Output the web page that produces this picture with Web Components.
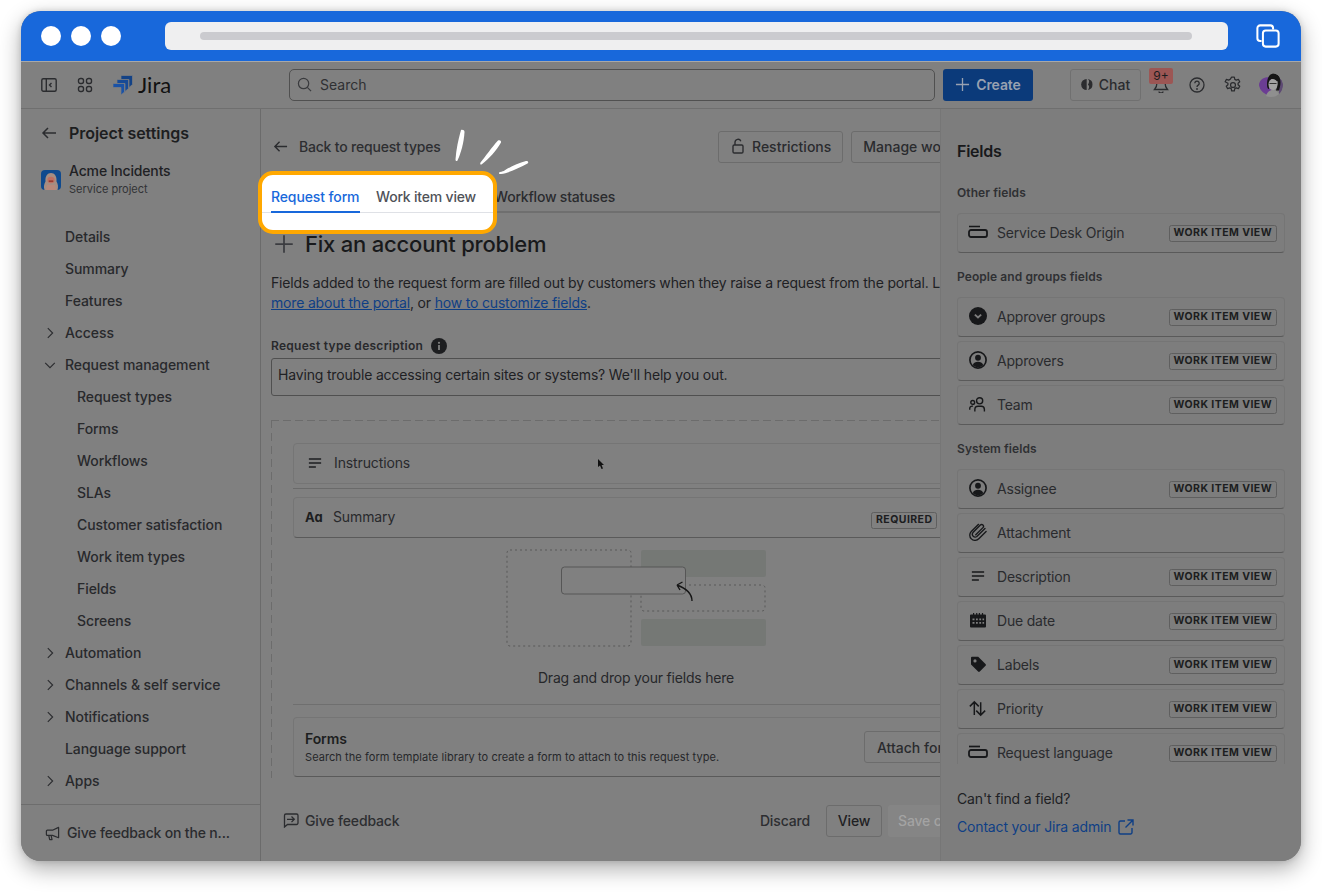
<!DOCTYPE html>
<html lang="en"><head><meta charset="utf-8"><title>Jira</title>
<style>
html,body{margin:0;background:#fff;height:100%;overflow:hidden}
body{padding:11px 21px;box-sizing:border-box;font-family:Inter,"Liberation Sans",sans-serif;font-size:14px;color:#1f2023}
</style></head><body>
<app-window></app-window>
<script>
const I={
back:'<path d="M15 8H2M7 3 2 8l5 5" fill="none" stroke="C" stroke-width="1.5"/>',
side:'<rect x=".8" y="1.8" width="14.4" height="12.4" rx="1.5" fill="none" stroke="C" stroke-width="1.4"/><path d="M5.3 2v12M10.5 6 8.5 8l2 2" fill="none" stroke="C" stroke-width="1.4"/>',
apps:'<g fill="none" stroke="C" stroke-width="1.4"><rect x="1.5" y="1.5" width="5" height="5" rx="2"/><rect x="9.5" y="1.5" width="5" height="5" rx="2"/><rect x="1.5" y="9.5" width="5" height="5" rx="2"/><rect x="9.5" y="9.5" width="5" height="5" rx="2"/></g>',
search:'<circle cx="7" cy="7" r="5.5" fill="none" stroke="C" stroke-width="1.3"/><path d="m11 11 4 4" stroke="C" stroke-width="1.3"/>',
plus:'<path d="M8 1v14M1 8h14" stroke="C" stroke-width="1.4"/>',
bell:'<path d="M8 1.5a4 4 0 0 0-4 4c0 4-1.2 5.5-2.5 7h13C13.200 11 12 9.500 12 5.500a4 4 0 0 0-4-4zM6 14.500a2 1.500 0 0 0 4 0" fill="none" stroke="C" stroke-width="1.3"/>',
help:'<circle cx="8" cy="8" r="7" fill="none" stroke="C" stroke-width="1.3"/><path d="M5.800 6.200a2.200 2.200 0 1 1 3.400 1.900c-.8.5-1.200 1-1.200 1.900" fill="none" stroke="C" stroke-width="1.3"/><circle cx="8" cy="12" r=".9" fill="C"/>',
gear:'<path d="M6.800 1h2.400l.4 2 1.300.7 1.900-.7 1.200 2.100-1.500 1.300v1.400l1.500 1.300-1.200 2.100-1.900-.7-1.300.7-.4 2H6.800l-.4-2-1.300-.7-1.900.7-1.200-2.100 1.500-1.300V6.400L1 5.100l1.200-2.100 1.900.7 1.300-.7z" fill="none" stroke="C" stroke-width="1.100" stroke-linejoin="round"/><circle cx="8" cy="8" r="2.200" fill="none" stroke="C" stroke-width="1.100"/>',
chat:'<path d="M7 1.200A6.800 6.800 0 1 0 7 14.800z" fill="C"/><path d="M8.500 1.300a6.800 6.800 0 0 1 0 13.400C11 12 10 9 8.500 8 10 6 11 3.500 8.500 1.300z" fill="C"/>',
right:'<path d="m5.500 2.500 5.500 5.500-5.500 5.500" fill="none" stroke="C" stroke-width="1.300"/>',
down:'<path d="m2.500 5.500 5.500 5.500 5.500-5.500" fill="none" stroke="C" stroke-width="1.300"/>',
mega:'<path d="M14.500 1.500v11L8 10H2.500a1 1 0 0 1-1-1V5.500a1 1 0 0 1 1-1H8zM4 10l1 4.500h2.500L6.500 10" fill="none" stroke="C" stroke-width="1.300" stroke-linejoin="round"/>',
lock:'<rect x="3" y="7" width="10" height="8" rx="1.300" fill="none" stroke="C" stroke-width="1.400"/><path d="M5 7V4.200a3 3 0 0 1 5.800-1" fill="none" stroke="C" stroke-width="1.400"/>',
info:'<circle cx="8" cy="8" r="8" fill="C"/><rect x="7.100" y="7" width="1.800" height="5" fill="#808080"/><circle cx="8" cy="4.800" r="1.100" fill="#808080"/>',
lines:'<path d="M1 3.500h14M1 8h14M1 12.500h8" stroke="C" stroke-width="1.700"/>',
feedback:'<path d="M1.500 15V3.500A1.500 1.500 0 0 1 3 2h10.500A1.500 1.500 0 0 1 15 3.500V11a1.500 1.500 0 0 1-1.500 1.500H4.500z" fill="none" stroke="C" stroke-width="1.300"/><path d="M4 7.300h7M8.500 4.500l2.800 2.800-2.800 2.800" fill="none" stroke="C" stroke-width="1.300"/>',
ext:'<path d="M7 2H2.500A1.500 1.500 0 0 0 1 3.500v10A1.500 1.500 0 0 0 2.500 15h10a1.500 1.500 0 0 0 1.500-1.500V9M9.500 1H15v5.500M15 1 7.500 8.500" fill="none" stroke="C" stroke-width="1.400"/>',
dropdown:'<path d="M1 2.500h11" stroke="C" stroke-width="1.700"/><rect x="1" y="6" width="18" height="7" rx="2" fill="none" stroke="C" stroke-width="1.800"/>',
groupd:'<circle cx="8" cy="8" r="8" fill="C"/><path d="m5.200 6.800 2.800 2.500 2.800-2.500" fill="none" stroke="#7d7d7d" stroke-width="1.700"/>',
person:'<circle cx="8" cy="8" r="7.200" fill="none" stroke="C" stroke-width="1.500"/><circle cx="8" cy="6" r="2.600" fill="C"/><path d="M3.300 12.600C4 10.200 6 9.600 8 9.600s4 .6 4.700 3a7 7 0 0 1-9.400 0z" fill="C"/>',
team:'<g fill="none" stroke="C" stroke-width="1.300"><circle cx="10" cy="4.500" r="2.900"/><path d="M5.500 14.500v-1.800a3 3 0 0 1 3-3h3a3 3 0 0 1 3 3v1.800"/><circle cx="3.500" cy="6" r="1.800"/><path d="M.7 13v-1.200A2.300 2.300 0 0 1 3 9.500h.8"/></g>',
clip:'<path d="M14.200 4.800 7 12a2.500 2.500 0 0 1-3.500-3.500l6.600-6.700a1.600 1.600 0 0 1 2.300 2.300L6 10.500M15.200 7.500 8.700 14A4.500 4.500 0 0 1 2 7.500l6.500-6.300" fill="none" stroke="C" stroke-width="1.200" stroke-linecap="round"/>',
cal:'<path fill="C" fill-rule="evenodd" d="M1 2.500h2V1h1.200v1.500h1.900V1h1.200v1.500h1.500V1h1.200v1.500h1.900V1h1.200v1.500H15a1 1 0 0 1 1 1V14.500a1 1 0 0 1-1 1H1a1 1 0 0 1-1-1V3.500a1 1 0 0 1 1-1zM2.500 6.500v1.800h2V6.500zm3.500 0v1.800h1.800V6.500zm3.300 0v1.800h1.800V6.500zm3.200 0v1.800h1.600V6.500zM2.500 10v1.800h2V10zM6 10v1.800h1.800V10zm3.300 0v1.800h1.800V10zm3.200 0v1.800h1.600V10z"/>',
tag:'<path fill="C" fill-rule="evenodd" d="M1 1.800A1 1 0 0 1 2 .8h6.200l7.300 7.300a1.200 1.200 0 0 1 0 1.700l-5.700 5.700a1.200 1.200 0 0 1-1.700 0L1 8.500zM5 3.300a1.600 1.600 0 1 0 0 3.200 1.600 1.600 0 0 0 0-3.200z"/>',
prio:'<path d="M5 14V2M.8 6 5 1.800 9.200 6M11 2v12M6.800 10l4.200 4.200 4.200-4.200" fill="none" stroke="C" stroke-width="1.400"/>'
};
customElements.define('x-icon',class extends HTMLElement{
  static get observedAttributes(){return['name','size','w','color'];}
  constructor(){super();this.attachShadow({mode:'open'}).innerHTML='<style>:host{display:inline-flex;flex:none}svg{display:block}</style><svg></svg>';}
  attributeChangedCallback(){this.render();}
  connectedCallback(){this.render();}
  render(){
    const n=this.getAttribute('name');if(!n||!I[n])return;
    const s=+(this.getAttribute('size')||16),w=+(this.getAttribute('w')||s),c=this.getAttribute('color')||'#26272a',svg=this.shadowRoot.querySelector('svg');
    svg.setAttribute('width',w);svg.setAttribute('height',s);
    svg.setAttribute('viewBox',`0 0 ${n==='dropdown'?20:16} 16`);
    svg.innerHTML=I[n].replace(/="C"/g,`="${c}"`);
  }
});
function define(name,html,init){
  const t=document.createElement('template');t.innerHTML=html;
  customElements.define(name,class extends HTMLElement{
    constructor(){super();this.attachShadow({mode:'open'}).appendChild(document.importNode(t.content,true));}
    connectedCallback(){if(init)init.call(this,this.shadowRoot);}
  });
}
define('work-tag',`<style>:host{display:inline-flex;align-items:flex-start;height:15px;padding:0 4px;border:1px solid #5f5f5f;border-radius:2.500px;font:700 10.500px/14px Inter,"Liberation Sans",sans-serif;letter-spacing:.44px;color:#1c1d20;white-space:nowrap;position:relative;top:1px}</style><slot></slot>`);
define('field-card',`<style>
:host{display:flex;align-items:center;height:40px;box-sizing:border-box;margin-bottom:4px;border-radius:4px;background:#7d7d7d;border:1px solid #757575;border-bottom:1px solid #5a5a5a;font-size:14px;letter-spacing:-.2px;color:#2a2b2e;padding:0 7px 2px 0;flex:none}
.i{width:39px;display:flex;justify-content:center}
.t{flex:1;white-space:nowrap}
</style><div class="i"><x-icon></x-icon></div><div class="t"><slot></slot></div><work-tag></work-tag>`,function(r){
  const ic=r.querySelector('x-icon'),n=this.getAttribute('icon');
  ic.setAttribute('color','#17181a');
  ic.setAttribute('size',this.getAttribute('isize')||(n==='dropdown'?16:18));
  if(n==='dropdown')ic.setAttribute('w',20);
  ic.setAttribute('name',n);
  const t=r.querySelector('work-tag');
  if(this.hasAttribute('notag'))t.remove();else t.textContent='WORK ITEM VIEW';
});
define('field-group',`<style>:host{display:block}h4{margin:0;font:600 12px/16px Inter,"Liberation Sans",sans-serif;letter-spacing:.08px;color:#2f3033;height:16px}.l{display:flex;flex-direction:column;margin-top:12px}</style><h4></h4><div class="l"><slot></slot></div>`,function(r){r.querySelector('h4').textContent=this.getAttribute('label');});
define('nav-item',`<style>
:host{display:flex;align-items:center;height:32px;font:500 14px/20px Inter,"Liberation Sans",sans-serif;letter-spacing:-.07px;color:#28292c;white-space:nowrap;padding-left:44px}
:host([sub]){padding-left:56px}
x-icon{margin-left:-22px;margin-right:8px}
</style><x-icon size="14" color="#2b2c2f"></x-icon><slot></slot>`,function(r){
  const ic=r.querySelector('x-icon'),c=this.getAttribute('chev');
  if(c)ic.setAttribute('name',c);else ic.remove();
});
define('top-nav',`<style>
:host{display:flex;align-items:center;height:46px;padding:0 20px;border-top:1px solid #a8a8a8;border-bottom:1px solid #6f6f6f;background:#808080;color:#2b2c2f;flex:none}
.j{display:flex;align-items:center;margin-left:20px;gap:5px;font:400 22px/28px Lato,Inter,sans-serif;color:#111;width:58px;flex:none}
.search{width:646px;height:32px;box-sizing:border-box;margin-left:118px;border:1px solid #505050;border-radius:5px;display:flex;align-items:center;gap:8px;padding:0 0 2px 7px;color:#2f3033;font-size:14px;flex:none}
.create{margin-left:8px;width:90px;height:32px;box-sizing:border-box;padding-bottom:2px;background:#0b3a7a;border-radius:3px;display:flex;align-items:center;justify-content:center;gap:6px;font-weight:600;letter-spacing:-.1px;color:#98a1b1;font-size:14px;flex:none}
.chat{margin-left:37px;width:71px;height:32px;box-sizing:border-box;padding-bottom:2px;border:1px solid #707070;border-radius:3px;display:flex;align-items:center;justify-content:center;gap:5px;font-weight:500;color:#2a2b2e;flex:none}
.bell{margin-left:12px;position:relative;width:16px;height:16px;margin-right:20px;flex:none}
.badge{position:absolute;left:-4px;top:-9px;width:24px;height:16px;background:#9c5654;border-radius:2px;color:#1b1c1e;font-size:12px;line-height:16px;text-align:center}
.av{width:24px;height:24px;border-radius:50%;overflow:hidden;margin-left:18px;flex:none}
</style>
<x-icon name="side" color="#2b2c2f"></x-icon>
<x-icon name="apps" color="#2b2c2f" style="margin-left:20px"></x-icon>
<div class="j"><svg width="20" height="20" viewBox="0 0 20 20" style="flex:none"><g stroke="#808080" stroke-width=".7" stroke-linejoin="round"><path fill="#134286" d="M8 .5h11.500v9l-3.500 3V4.500H8z"/><path fill="#174a96" d="M4 4.500h11.500v9L12 16.500V8.500H4z"/><path fill="#1a52a6" d="M0 8.500h11.500v8.500L8 20V12.500H0z"/></g></svg><span>Jira</span></div>
<div class="search"><x-icon name="search" color="#3a3b3e" size="15"></x-icon>Search</div>
<div class="create"><x-icon name="plus" color="#98a1b1" size="15"></x-icon>Create</div>
<div class="chat"><x-icon name="chat" color="#2b2c2f" size="13"></x-icon>Chat</div>
<div class="bell"><x-icon name="bell" color="#2b2c2f"></x-icon><div class="badge">9+</div></div>
<x-icon name="help" color="#2b2c2f"></x-icon>
<x-icon name="gear" color="#2b2c2f" size="18" style="margin:0 -1px 0 19px"></x-icon>
<div class="av"><svg width="24" height="24" viewBox="0 0 24 24" style="display:block"><rect width="24" height="24" fill="#808080"/><path d="M12 4.500C8 3.500 1 5 0 11c-.5 5 4 9 9 11.500l3-1z" fill="#6b3d93"/><path d="M24 11c-.5-3-2-5-4-6v17c2.500-2 4.500-6 4-11z" fill="#5d4a73"/><path d="M7 24c.5-5 4-7 7-7s6 2 6.500 7z" fill="#8f8f8f"/><path d="M8 12C8 4 11 .5 15 .5s6.500 3.500 6.500 9c0 3-1 6-1.500 8h-3l2-9-7-2.500-2 4v6H9.500C8.500 15.500 8 14 8 12z" fill="#151515"/><ellipse cx="14" cy="11.500" rx="4.500" ry="5.500" fill="#a3a3a3"/><path d="M10.500 10.500h7" stroke="#333" stroke-width="1"/></svg></div>
`);
define('side-nav',`<style>
:host{display:flex;flex-direction:column;width:239px;border-right:1px solid #6b6b6b;flex:none;background:#808080}
.head{display:flex;align-items:center;height:24px;margin-top:12px;padding-left:20px;gap:12px;font:600 16px/24px Inter,"Liberation Sans",sans-serif;letter-spacing:-.04px;color:#1d1e20}
.proj{display:flex;align-items:center;margin:17px 0 0 20px;gap:8px;height:36px}
.proj b{display:block;font:500 14px/18px Inter,"Liberation Sans",sans-serif;letter-spacing:-.15px;color:#202124}
.proj i{display:block;font:400 11px/18px Inter,"Liberation Sans",sans-serif;color:#323336}
.list{flex:1;margin-top:23px;display:flex;flex-direction:column}
.foot{height:57px;border-top:1px solid #6d6d6d;display:flex;align-items:center;padding-left:24px;gap:7px;font:500 14px/20px Inter,"Liberation Sans",sans-serif;letter-spacing:-.17px;color:#2a2b2e;box-sizing:border-box;white-space:nowrap;flex:none}
</style>
<div class="head"><x-icon name="back" color="#2b2c2f"></x-icon>Project settings</div>
<div class="proj"><svg width="20" height="20" viewBox="0 0 20 20" style="flex:none"><rect width="20" height="20" rx="4" fill="#0f4a8e"/><path d="M3.500 20c-1-3-.5-6 1-8.500C4 6 6.500 3 10 3s6 3 5.500 8.500c1.500 2.500 2 5.500 1 8.500z" fill="#a58d82"/><ellipse cx="10" cy="10" rx="3.600" ry="3.200" fill="#bd6f61"/><rect x="7.800" y="10.500" width="4.400" height="1.300" fill="#8e2f25"/><path d="M6 15h8l1 5H5z" fill="#b7897b"/></svg><div><b>Acme Incidents</b><i>Service project</i></div></div>
<div class="list">
<nav-item>Details</nav-item><nav-item>Summary</nav-item><nav-item>Features</nav-item>
<nav-item chev="right">Access</nav-item><nav-item chev="down">Request management</nav-item>
<nav-item sub>Request types</nav-item><nav-item sub>Forms</nav-item><nav-item sub>Workflows</nav-item><nav-item sub>SLAs</nav-item><nav-item sub>Customer satisfaction</nav-item><nav-item sub>Work item types</nav-item><nav-item sub>Fields</nav-item><nav-item sub>Screens</nav-item>
<nav-item chev="right">Automation</nav-item><nav-item chev="right">Channels &amp; self service</nav-item><nav-item chev="right">Notifications</nav-item><nav-item>Language support</nav-item><nav-item chev="right">Apps</nav-item>
</div>
<div class="foot"><x-icon name="mega" color="#2b2c2f" size="15"></x-icon>Give feedback on the n...</div>
`);
define('drag-art',`<style>:host{display:block;height:98px;margin-top:11px}svg{display:block;margin:0 auto}</style>
<svg width="260" height="98" viewBox="0 0 260 98" fill="none">
<rect x="1" y="1" width="124" height="96" rx="3" stroke="#585858" stroke-dasharray="2 3"/>
<rect x="135" y="1" width="125" height="27" rx="2" fill="#757875"/>
<rect x="135" y="36" width="124" height="26" rx="3" stroke="#585858" stroke-dasharray="2 3"/>
<rect x="135" y="70" width="125" height="27" rx="2" fill="#757875"/>
<rect x="55.500" y="18" width="124" height="27" rx="3" fill="#808080" stroke="#565656"/>
<path d="M186 52c0-7-4-12-15-16M171 36l5.500-3M171 36l3 5" stroke="#151515" stroke-width="1.400"/>
</svg>`);
define('request-main',`<style>
:host{display:block;width:679px;overflow:hidden;flex:none;background:#808080;position:relative}
.in{width:730px;margin-left:10px;height:100%;position:relative;box-sizing:border-box}
.top{display:flex;align-items:center;height:32px;margin-top:22px}
.backl{display:flex;align-items:center;gap:11px;color:#2d2e31;font-weight:500;font-size:14px;letter-spacing:-.2px;margin-left:2px;width:445px;flex:none;position:relative;top:-1px}
.btn{height:32px;box-sizing:border-box;border:1px solid #6c6c6c;border-radius:3px;display:flex;align-items:center;padding:0 11px 2px;gap:6px;font-weight:500;color:#2a2b2e;font-size:14px;white-space:nowrap;flex:none}
.tabs{display:flex;height:32px;margin-top:18px;border-bottom:2px solid #6f6f6f;box-sizing:border-box;padding-left:223px;align-items:center;font-weight:500;letter-spacing:-.2px;color:#2a2b2e;width:680px}
h1{margin:15px 0 0;height:32px;display:flex;align-items:center;gap:11px;font:500 22px/32px Inter,"Liberation Sans",sans-serif;letter-spacing:-.2px;color:#18191b;margin-left:3px}
p{margin:13px 0 0;font-size:14px;line-height:20px;white-space:nowrap;color:#202124;letter-spacing:-.18px}
a{color:#0f3f85;text-decoration:underline}
.lab{margin-top:25px;height:16px;display:flex;align-items:center;gap:8px;font:600 12px/16px Inter,"Liberation Sans",sans-serif;letter-spacing:.28px;color:#28292c}
.inp{margin-top:4px;height:38px;box-sizing:border-box;border:1px solid #505050;border-radius:3px;padding:0 6px 6px;display:flex;align-items:center;color:#202124;white-space:nowrap;letter-spacing:-.17px}
.drop{margin-top:24px;padding:23px 22px 0;height:358px;box-sizing:border-box;background:linear-gradient(to right,#6c6c6c 8px,transparent 8px) 0 0/12px 1px repeat-x,linear-gradient(to bottom,#6c6c6c 8px,transparent 8px) 0 0/1px 13px repeat-y}
.card{display:flex;align-items:center;height:41px;box-sizing:border-box;border:1px solid #757575;border-radius:4px;padding:0 0 2px 14px;gap:12px;color:#28292c;position:relative;letter-spacing:-.12px}
.sep{height:1px;background:#6a6a6a;margin:4px 0 8px}
.sum{border-bottom-color:#5a5a5a;padding-left:11px;gap:10px}
.tagw{position:absolute;left:577px;top:10px}
.drag{text-align:center;margin-top:21px;line-height:20px;color:#26272a;letter-spacing:-.2px}
.hr{height:1px;background:#6f6f6f;margin-top:16px}
.forms{margin-top:12px;height:60px;border:1px solid #757575;border-bottom-color:#5a5a5a;border-radius:4px;box-sizing:border-box;padding:0 0 0 11px;display:flex;align-items:center;justify-content:space-between}
.ft{padding-top:2px}
.forms b{display:block;font:600 14px/16px Inter,"Liberation Sans",sans-serif;color:#1d1e20;margin-bottom:2px;letter-spacing:-.1px}
.forms i{display:block;font:400 11px/16px Inter,"Liberation Sans",sans-serif;color:#26272a;letter-spacing:.07px;white-space:nowrap}
.attach{margin-right:14px;height:32px;width:100px;box-sizing:border-box;border:1px solid #6c6c6c;border-radius:3px;font-weight:500;display:flex;align-items:center;padding:0 0 0 12px;color:#2a2b2e;white-space:nowrap;overflow:hidden;flex:none}
.foot{display:flex;align-items:center;height:32px;margin-top:27px;width:707px;font-weight:500;letter-spacing:-.15px;color:#2d2e31;white-space:nowrap}
.fb{display:flex;align-items:center;gap:6px;margin-left:12px;flex:1;position:relative;top:-1px}
.dis{position:relative;top:-1px}
.save{width:90px;height:32px;background:#858585;border-radius:3px;margin-left:6px;color:#a3a3a3;display:flex;align-items:center;padding:0 0 2px 10px;box-sizing:border-box;flex:none}
.view{height:32px;border:1px solid #6c6c6c;border-radius:3px;width:56px;box-sizing:border-box;margin-left:16px;padding-bottom:2px;display:flex;align-items:center;justify-content:center;color:#1f2023;flex:none}
.cur{position:absolute;left:327px;top:328px}
</style>
<div class="in">
<div class="top"><div class="backl"><x-icon name="back" color="#2b2c2f" size="15"></x-icon>Back to request types</div>
<div class="btn"><x-icon name="lock" color="#2b2c2f"></x-icon>Restrictions</div><div class="btn" style="margin-left:8px;">Manage workflow</div></div>
<div class="tabs"><span>Workflow statuses</span></div>
<h1><x-icon name="plus" color="#3b3c40" size="20"></x-icon>Fix an account problem</h1>
<p>Fields added to the request form are filled out by customers when they raise a request from the portal. Learn<br><a>more about the portal</a>, or <a>how to customize fields</a>.</p>
<div class="lab">Request type description<x-icon name="info" color="#1d1e20"></x-icon></div>
<div class="inp">Having trouble accessing certain sites or systems? We'll help you out.</div>
<div class="drop">
<div class="card"><x-icon name="lines" color="#1d1e20" size="14"></x-icon>Instructions</div>
<div class="sep"></div>
<div class="card sum"><span style="font:700 13px/16px Inter,sans-serif;color:#1d1e20;width:18px">Aɑ</span>Summary<span class="tagw"><work-tag>REQUIRED</work-tag></span></div>
<drag-art></drag-art>
<div class="drag">Drag and drop your fields here</div>
<div class="hr"></div>
<div class="forms"><div class="ft"><b>Forms</b><i>Search the form template library to create a form to attach to this request type.</i></div><div class="attach">Attach form</div></div>
</div>
<div class="foot"><div class="fb"><x-icon name="feedback" color="#2b2c2f"></x-icon>Give feedback</div><span class="dis">Discard</span><div class="view">View</div><div class="save">Save changes</div></div>
<svg class="cur" width="7" height="11" viewBox="0 0 7 11"><path d="M0 0v8l2-1.500L3.500 10l1.500-.6L3.600 6H6z" fill="#111"/></svg>
</div>`);
define('fields-panel',`<style>
:host{display:flex;flex-direction:column;flex:1;background:#7d7d7d;border-left:1px solid #767676;padding:0 16px;box-sizing:border-box;min-width:0}
h3{margin:30px 0 0;height:24px;font:600 16px/24px Inter,"Liberation Sans",sans-serif;letter-spacing:-.25px;color:#18191b}
.sc{height:579px;overflow:hidden;width:328px;flex:none;display:flex;flex-direction:column;margin-top:22px}
field-group{margin-bottom:12px;flex:none}
.cant{margin-top:25px;line-height:20px;color:#202124;letter-spacing:-.15px}
.con{margin-top:8px;display:flex;align-items:center;gap:7px;color:#0f3f85;line-height:20px;letter-spacing:-.17px}
</style>
<h3>Fields</h3>
<div class="sc">
<field-group label="Other fields"><field-card icon="dropdown">Service Desk Origin</field-card></field-group>
<field-group label="People and groups fields"><field-card icon="groupd">Approver groups</field-card><field-card icon="person">Approvers</field-card><field-card icon="team" isize="17">Team</field-card></field-group>
<field-group label="System fields"><field-card icon="person">Assignee</field-card><field-card icon="clip" notag>Attachment</field-card><field-card icon="lines" isize="14">Description</field-card><field-card icon="cal" isize="16">Due date</field-card><field-card icon="tag" isize="16">Labels</field-card><field-card icon="prio" isize="17">Priority</field-card><field-card icon="dropdown">Request language</field-card></field-group>
</div>
<div class="cant">Can't find a field?</div>
<div class="con">Contact your Jira admin <x-icon name="ext" color="#0f3f85"></x-icon></div>`);
define('spot-light',`<style>
:host{position:absolute;left:237px;top:160px;width:239px;height:63px;box-sizing:border-box;border:4px solid #ffa800;border-radius:15px;background:#fff;font:500 14px/20px Inter,"Liberation Sans",sans-serif;letter-spacing:-.2px}
.t{position:absolute;left:0;top:6px;height:32px;box-sizing:border-box;border-bottom:1.500px solid #dfe1e6;padding-left:9px;display:flex;gap:16px;width:231px}
span{display:block;height:32px;box-sizing:border-box;padding-top:6px;color:#505258;white-space:nowrap}
.a{color:#1868db;border-bottom:2.500px solid #1868db;width:89px;letter-spacing:-.12px}
</style><div class="t"><span class="a">Request form</span><span>Work item view</span></div>`);
define('app-window',`<style>
:host{display:flex;flex-direction:column;width:1280px;height:850px;border-radius:20px;overflow:hidden;position:relative;background:#808080;box-shadow:0 8px 22px rgba(0,0,0,.32),0 0 6px rgba(0,0,0,.15)}
.bar{height:50px;background:#1868db;display:flex;align-items:center;padding:0 21px 0 20px;flex:none}
.d{width:20px;height:20px;border-radius:50%;background:#fff;margin-right:10px;flex:none}
.url{width:1063px;height:28px;margin-left:34px;background:#efeff0;border-radius:6px;display:flex;align-items:center;padding:0 36px 0 35px;box-sizing:border-box;flex:none}
.url i{display:block;height:8px;flex:1;background:#cbcbcf;border-radius:4px}
.cp{margin-left:28px;flex:none}
.row{display:flex;flex:1;min-height:0}
.sc{position:absolute;left:430px;top:115px}
</style>
<div class="bar"><div class="d"></div><div class="d"></div><div class="d"></div><div class="url"><i></i></div>
<svg class="cp" width="24" height="24" viewBox="0 0 26 26" fill="none" stroke="#fff" stroke-width="2.200"><path d="M6 18.500H4.500a3 3 0 0 1-3-3V4.500a3 3 0 0 1 3-3h11a3 3 0 0 1 3 3V6"/><rect x="7.500" y="7" width="17" height="17.500" rx="3"/></svg></div>
<top-nav></top-nav>
<div class="row"><side-nav></side-nav><request-main></request-main><fields-panel></fields-panel></div>
<spot-light></spot-light>
<svg class="sc" width="80" height="50" viewBox="0 0 80 50" fill="#fff"><path d="M10 4c2-.5 3.500.5 3.500 2C13 16 10 27 6.500 34.500c-1 1-2 .5-2-1C5 24 7.500 13 10 4z"/><path d="M47 14.500c2-1 3.500.5 3 2C46 24 38 33 30.500 38.500c-1.500.5-1.500-1-1-2C34 31 41 21 47 14.500z"/><path d="M75 35c2-.5 3 1.500 1.500 2.500C68 42 58 47 50 48c-2 .5-3-1-1-2 2-.5 4-1 4.500-1.500C59 41 67 37 75 35z"/></svg>
`);
</script>
</body></html>
